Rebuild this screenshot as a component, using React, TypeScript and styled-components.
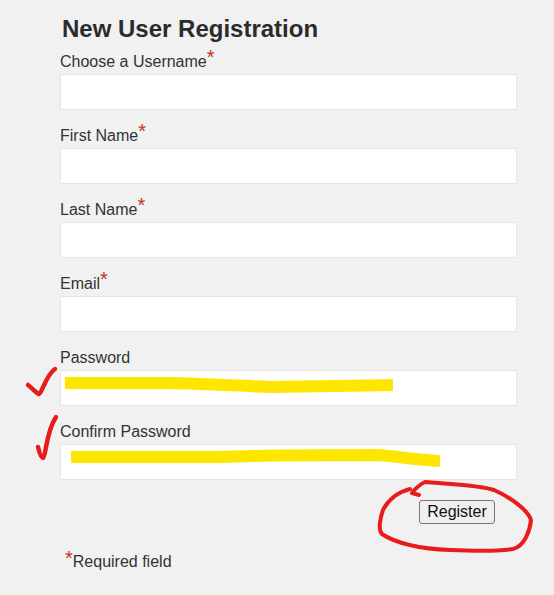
import React from 'react'
import styled, { createGlobalStyle } from 'styled-components'

const GlobalStyle = createGlobalStyle`
    html, body {
        margin: 0;
        padding: 0;
        background: #f1f1f1;
    }
    body {
        font-family: "Liberation Sans", Arial, sans-serif;
        color: #333;
    }
`

const Page = styled.div`
    position: relative;
    width: 554px;
    height: 595px;
    overflow: hidden;
    box-sizing: border-box;
    padding: 14px 37px 0 60px;
`

const Paper = styled.svg`
    position: absolute;
    left: 0;
    top: 0;
    z-index: -1;
`

const Title = styled.h1`
    margin: 0 0 0 2px;
    height: 36px;
    font-size: 24px;
    line-height: 29px;
    font-weight: bold;
    color: #2b2b2b;
`

const Form = styled.form`
    display: flex;
    flex-direction: column;
    gap: 14px;
`

const Field = styled.div`
    display: flex;
    flex-direction: column;
    height: 60px;
    justify-content: flex-end;
`

const Label = styled.label`
    display: block;
    height: 24px;
    font-size: 16px;
    line-height: 24px;
    color: #333;
    white-space: nowrap;
`

const Star = styled.span`
    color: #c8321e;
    font-size: 20px;
    line-height: 0;
    position: relative;
    top: -3px;
`

const Input = styled.input`
    display: block;
    box-sizing: border-box;
    width: 457px;
    height: 36px;
    background: #fff;
    border: 1px solid #e4e4e4;
    border-radius: 2px;
    outline: none;
`

const Actions = styled.div`
    display: flex;
    justify-content: flex-end;
    margin-top: 6px;
    padding-right: 22px;
`

const Button = styled.button`
    box-sizing: border-box;
    width: 76px;
    height: 24px;
    padding: 0;
    font-family: "Liberation Sans", Arial, sans-serif;
    font-size: 16px;
    line-height: 20px;
    color: #111;
    background: #efefef;
    border: 1px solid #767676;
    border-radius: 3px;
`

const Note = styled.p`
    margin: 26px 0 0 5px;
    font-size: 16px;
    line-height: 24px;
    color: #333;
`

const NoteStar = styled(Star)`
    top: -2px;
`

const Markup = styled.svg`
    position: absolute;
    left: 0;
    top: 0;
    pointer-events: none;
`

const fields = [
    { name: 'Choose a Username', required: true, type: 'text' },
    { name: 'First Name', required: true, type: 'text' },
    { name: 'Last Name', required: true, type: 'text' },
    { name: 'Email', required: true, type: 'text' },
    { name: 'Password', required: false, type: 'password' },
    { name: 'Confirm Password', required: false, type: 'password' },
]

const App = () => {
    return (
        <Page>
            <GlobalStyle/>
            <Paper width="554" height="595" aria-hidden="true">
                <filter id="paper-grain">
                    <feTurbulence type="fractalNoise" baseFrequency="0.35" numOctaves="2" seed="4"/>
                    <feColorMatrix values="0 0 0 0 0.45  0 0 0 0 0.45  0 0 0 0 0.45  0.5 0 0 0 -0.2"/>
                </filter>
                <rect width="554" height="595" filter="url(#paper-grain)" opacity="0.2"/>
            </Paper>
            <Title>New User Registration</Title>
            <Form onSubmit={ e => e.preventDefault() }>
                { fields.map(field => (
                    <Field key={ field.name }>
                        <Label>
                            { field.name }
                            { field.required && <Star>*</Star> }
                        </Label>
                        <Input type={ field.type }/>
                    </Field>
                )) }
                <Actions>
                    <Button type="submit">Register</Button>
                </Actions>
            </Form>
            <Note><NoteStar>*</NoteStar>Required field</Note>
            <Markup width="554" height="595" viewBox="0 0 554 595" fill="none">
                <g stroke="#ffe600" strokeWidth="12" strokeLinejoin="round">
                    <path d="M65 383 L172 383 C210 384 240 386 270 387 C300 386 340 386 393 385"/>
                    <path d="M71 457 L220 457 C260 455 300 455 380 455 C400 457 420 460 440 461"/>
                </g>
                <g stroke="#e81c1c" strokeLinecap="round" strokeLinejoin="round" fill="none">
                    <path strokeWidth="4.5" d="M28 385 C32 388 36 393 39 394 C42 393 46 375 55 369"/>
                    <path strokeWidth="4.5" d="M38 447 C39 451 41 458 43 458 C46 456 46 432 56 417"/>
                    <path strokeWidth="4" d="M410 489 C398 492 388 500 383 510 C380 518 378 530 382 534 C395 543 420 549 450 550 C475 551 500 551 513 549 C525 546 530 530 531 520 C528 510 510 497 494 490 C480 485 450 484 425 482 C420 484 414 490 412 493 L419 495"/>
                </g>
            </Markup>
        </Page>
    )
}

export default App
